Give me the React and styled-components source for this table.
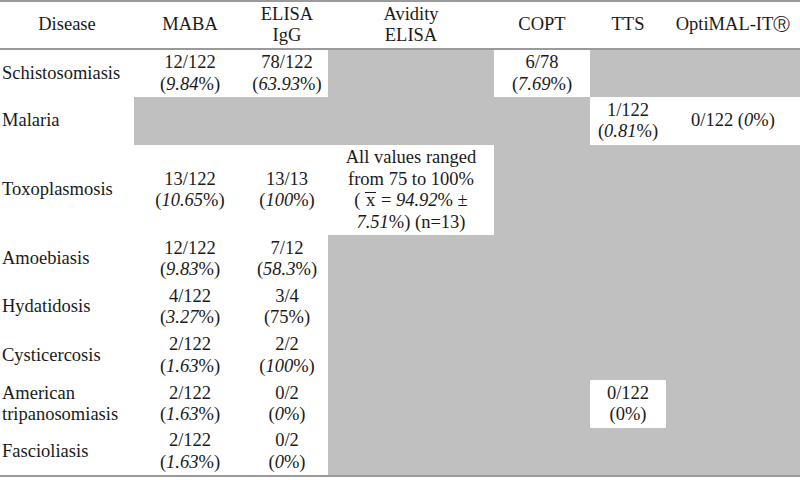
import React from 'react';
import styled, {createGlobalStyle} from 'styled-components';

const shade = '#c0c0c0';
const rule = '#9a9a9a';
const serif = '"Liberation Serif", "Times New Roman", "DejaVu Serif", serif';

const GlobalStyle = createGlobalStyle`
body {
    margin: 0;
    background: #ffffff;
    font-family: ${serif};
    color: #1a1a1a;
}
`;

const Table = styled.table`
width: 800px;
table-layout: fixed;
border-collapse: collapse;
border-top: 2px solid ${rule};
border-bottom: 2px solid ${rule};
font-family: ${serif};
font-size: 18.5px;
line-height: 21.5px;
color: #1a1a1a;
`;

const HeadRow = styled.tr`
height: 48px;
border-bottom: 2px solid ${rule};
`;

const HeadCell = styled.th`
font-weight: normal;
text-align: center;
vertical-align: middle;
padding: 0 2px;
`;

const Row = styled.tr`
height: ${p => p.$h || 48}px;
`;

const Name = styled.td`
text-align: left;
vertical-align: middle;
padding: 0 2px;
white-space: nowrap;
`;

const Cell = styled.td`
text-align: center;
vertical-align: middle;
padding: 2px 2px;
white-space: nowrap;
background: ${p => (p.$shaded ? shade : '#ffffff')};
`;

const Mean = styled.span`
display: inline-block;
line-height: 14px;
padding: 0 1px;
border-top: 1.5px solid #1a1a1a;
`;

const Reg = styled.span`
font-family: "DejaVu Sans", sans-serif;
font-size: 17px;
`;

const widths = [134, 112, 82, 166, 96, 76, 134];

const Frac = ({n, pct, italic = true}) => (
    <>
        {n}
        <br />
        ({italic ? <i>{pct}</i> : pct}%)
    </>
);

const rows = [
    {
        name: 'Schistosomiasis',
        cells: [
            <Frac n="12/122" pct="9.84" />,
            <Frac n="78/122" pct="63.93" />,
            null,
            <Frac n="6/78" pct="7.69" />,
            null,
            null,
        ],
    },
    {
        name: 'Malaria',
        cells: [null, null, null, null, <Frac n="1/122" pct="0.81" />, <>0/122 (<i>0</i>%)</>],
    },
    {
        name: 'Toxoplasmosis',
        h: 90,
        cells: [
            <Frac n="13/122" pct="10.65" />,
            <Frac n="13/13" pct="100" />,
            <>
                All values ranged
                <br />
                from 75 to 100%
                <br />( <Mean>x</Mean> = <i>94.92</i>% ±
                <br />
                <i>7.51</i>%) (n=13)
            </>,
            null,
            null,
            null,
        ],
    },
    {
        name: 'Amoebiasis',
        cells: [<Frac n="12/122" pct="9.83" />, <Frac n="7/12" pct="58.3" />, null, null, null, null],
    },
    {
        name: 'Hydatidosis',
        cells: [<Frac n="4/122" pct="3.27" />, <Frac n="3/4" pct="75" italic={false} />, null, null, null, null],
    },
    {
        name: 'Cysticercosis',
        h: 49,
        cells: [<Frac n="2/122" pct="1.63" />, <Frac n="2/2" pct="100" />, null, null, null, null],
    },
    {
        name: (
            <>
                American
                <br />
                tripanosomiasis
            </>
        ),
        cells: [
            <Frac n="2/122" pct="1.63" />,
            <Frac n="0/2" pct="0" />,
            null,
            null,
            <Frac n="0/122" pct="0" italic={false} />,
            null,
        ],
    },
    {
        name: 'Fascioliasis',
        h: 47,
        cells: [<Frac n="2/122" pct="1.63" />, <Frac n="0/2" pct="0" />, null, null, null, null],
    },
];

const App = () => {
    return (
        <>
            <GlobalStyle />
            <Table>
                <colgroup>
                    {widths.map((w, i) => (
                        <col key={i} style={{width: w}} />
                    ))}
                </colgroup>
                <thead>
                    <HeadRow>
                        <HeadCell>Disease</HeadCell>
                        <HeadCell>MABA</HeadCell>
                        <HeadCell>
                            ELISA
                            <br />
                            IgG
                        </HeadCell>
                        <HeadCell>
                            Avidity
                            <br />
                            ELISA
                        </HeadCell>
                        <HeadCell>COPT</HeadCell>
                        <HeadCell>TTS</HeadCell>
                        <HeadCell>
                            OptiMAL-IT<Reg>Ⓡ</Reg>
                        </HeadCell>
                    </HeadRow>
                </thead>
                <tbody>
                    {rows.map((r, i) => (
                        <Row key={i} $h={r.h}>
                            <Name>{r.name}</Name>
                            {r.cells.map((c, j) => (
                                <Cell key={j} $shaded={c === null}>
                                    {c}
                                </Cell>
                            ))}
                        </Row>
                    ))}
                </tbody>
            </Table>
        </>
    );
};

export default App;
